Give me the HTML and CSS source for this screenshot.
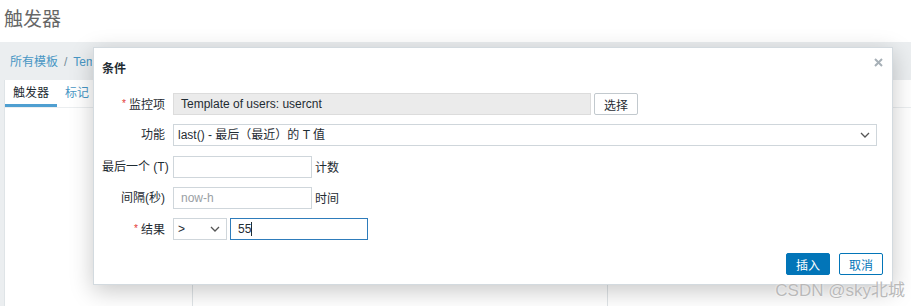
FILE: index.html
```html
<!DOCTYPE html>
<html lang="zh-CN">
<head>
  <meta charset="UTF-8">
  <title>触发器</title>
  <link rel="stylesheet" href="styles.css">
</head>
<body>
  <header class="page-title">触发器</header>
  <nav class="breadcrumb">
    <a>所有模板</a><span class="sep">/</span><a>Template OS Linux</a>
  </nav>
  <div class="panel">
    <div class="tabs">
      <div class="tab active">触发器</div>
      <div class="tab">标记</div>
    </div>
    <div class="columns">
      <div class="col col-a"></div>
      <div class="col col-b"></div>
      <div class="col col-c"></div>
    </div>
  </div>

  <div class="modal">
    <div class="modal-head">
      <h2>条件</h2>
      <button class="close" aria-label="关闭">
        <svg width="9" height="9" viewBox="0 0 9 9"><path d="M1 1 L8 8 M8 1 L1 8" stroke="#a7b0b7" stroke-width="2"/></svg>
      </button>
    </div>
    <form class="form">
      <label class="required">监控项</label>
      <div class="field">
        <div class="input readonly wide">Template of users: usercnt</div>
        <button type="button" class="btn-alt">选择</button>
      </div>

      <label>功能</label>
      <div class="field">
        <div class="select full">
          <span>last() - 最后（最近）的 T 值</span>
          <svg width="10" height="6" viewBox="0 0 10 6"><path d="M1 1 L5 5 L9 1" fill="none" stroke="#555" stroke-width="1.3"/></svg>
        </div>
      </div>

      <label>最后一个 (T)</label>
      <div class="field">
        <div class="input short"></div>
        <span class="unit">计数</span>
      </div>

      <label>间隔(秒)</label>
      <div class="field">
        <div class="input short placeholder">now-h</div>
        <span class="unit">时间</span>
      </div>

      <label class="required">结果</label>
      <div class="field">
        <div class="select op">
          <span>&gt;</span>
          <svg width="10" height="6" viewBox="0 0 10 6"><path d="M1 1 L5 5 L9 1" fill="none" stroke="#555" stroke-width="1.3"/></svg>
        </div>
        <div class="input value focused">55<span class="caret"></span></div>
      </div>
    </form>
    <div class="modal-foot">
      <button class="btn-primary">插入</button>
      <button class="btn-alt blue">取消</button>
    </div>
  </div>

  <div class="watermark">CSDN @sky北城</div>
</body>
</html>
```
FILE: styles.css
```css
body {
  margin: 0;
  background-color: #ebeef0;
  font-family: "Liberation Sans", Arial, "Noto Sans CJK SC", sans-serif;
  font-size: 12px;
  color: #1f2c33;
  height: 306px;
  overflow: hidden;
  position: relative;
}

/* Page behind the dialog */
.page-title {
  background-color: #fff;
  height: 42px;
  line-height: 40px;
  padding-left: 4px;
  font-size: 19px;
  color: #666;
}
.breadcrumb {
  height: 38px;
  line-height: 40px;
  padding-left: 10px;
  width: 82px;
  overflow: hidden;
  white-space: nowrap;
  color: #4796c4;
}
.breadcrumb .sep {
  color: #768d99;
  margin: 0 6px;
}
.panel {
  margin-left: 4px;
  background-color: #fff;
  border-left: 1px solid #dfe4e7;
  height: 226px;
}
.tabs {
  display: flex;
  height: 27px;
  border-bottom: 1px solid #ebeef0;
}
.tab {
  padding: 0 8px;
  line-height: 26px;
  color: #4796c4;
}
.tab.active {
  color: #1f2c33;
  border-bottom: 3px solid #4f9fd1;
  width: 36px;
  text-align: center;
}
.columns {
  display: flex;
  height: 198px;
}
.col-a {
  width: 187px;
  border-right: 1px solid #dfe4e7;
}
.col-b {
  width: 414px;
  border-right: 1px solid #dfe4e7;
}

/* Dialog */
.modal {
  position: absolute;
  left: 93px;
  top: 47px;
  width: 800px;
  height: 238px;
  box-sizing: border-box;
  background-color: #fff;
  border: 1px solid #d3dadf;
  box-shadow: 0 6px 22px rgba(0, 0, 0, 0.22);
  display: flex;
  flex-direction: column;
}
.modal-head {
  display: flex;
  justify-content: space-between;
  padding: 14px 9px 0 8px;
  height: 31px;
}
.modal-head h2 {
  margin: 0;
  font-size: 12px;
  font-weight: bold;
  line-height: 14px;
}
.close {
  border: 0;
  background: none;
  padding: 0;
  margin-top: -7px;
  height: 12px;
  cursor: pointer;
}
.form {
  display: grid;
  grid-template-columns: 63px 1fr;
  column-gap: 8px;
  row-gap: 9.25px;
  padding: 0 16px 0 8px;
  grid-auto-rows: 22px;
}
.form label {
  text-align: right;
  line-height: 22px;
  white-space: nowrap;
}
.form label.required::before {
  content: "*";
  color: #e33734;
  margin-right: 3px;
  font-size: 10px;
  vertical-align: 2px;
}
.field {
  display: flex;
  align-items: center;
  gap: 3px;
}
.input, .select {
  box-sizing: border-box;
  height: 22px;
  border: 1px solid #cfd6db;
  background-color: #fff;
  padding: 0 7px;
  line-height: 20px;
  white-space: nowrap;
}
.input.readonly {
  background-color: #ebebeb;
  border-color: #dcdcdc;
}
.input.wide { width: 418px; }
.input.short { width: 139px; }
.input.placeholder { color: #9aa0a5; }
.input.value { width: 138px; }
.input.focused { border-color: #2e7cbb; }
.caret {
  display: inline-block;
  width: 1px;
  height: 14px;
  background-color: #1f2c33;
  vertical-align: -3px;
}
.select {
  display: flex;
  align-items: center;
  justify-content: space-between;
  padding-right: 6px;
}
.select.full { width: 704px; padding-left: 4px; }
.select.op { width: 54px; padding-left: 4px; }

.btn-alt, .btn-primary {
  height: 22px;
  box-sizing: border-box;
  font-family: inherit;
  font-size: 12px;
  border-radius: 2px;
  padding: 0 9px;
  cursor: pointer;
}
.btn-alt {
  background-color: #fff;
  border: 1px solid #c2c9ce;
  color: #1f2c33;
}
.btn-alt.blue {
  border-color: #0275b8;
  color: #0275b8;
}
.btn-primary {
  background-color: #0275b8;
  border: 1px solid #0275b8;
  color: #fff;
}
.modal-foot {
  margin-top: auto;
  display: flex;
  justify-content: flex-end;
  gap: 9px;
  padding: 0 9px 9px 0;
}

.watermark {
  position: absolute;
  right: 6px;
  bottom: 5px;
  font-size: 17px;
  color: #b9b9b9;
  text-shadow: 0 0 2px #fff;
}
```
